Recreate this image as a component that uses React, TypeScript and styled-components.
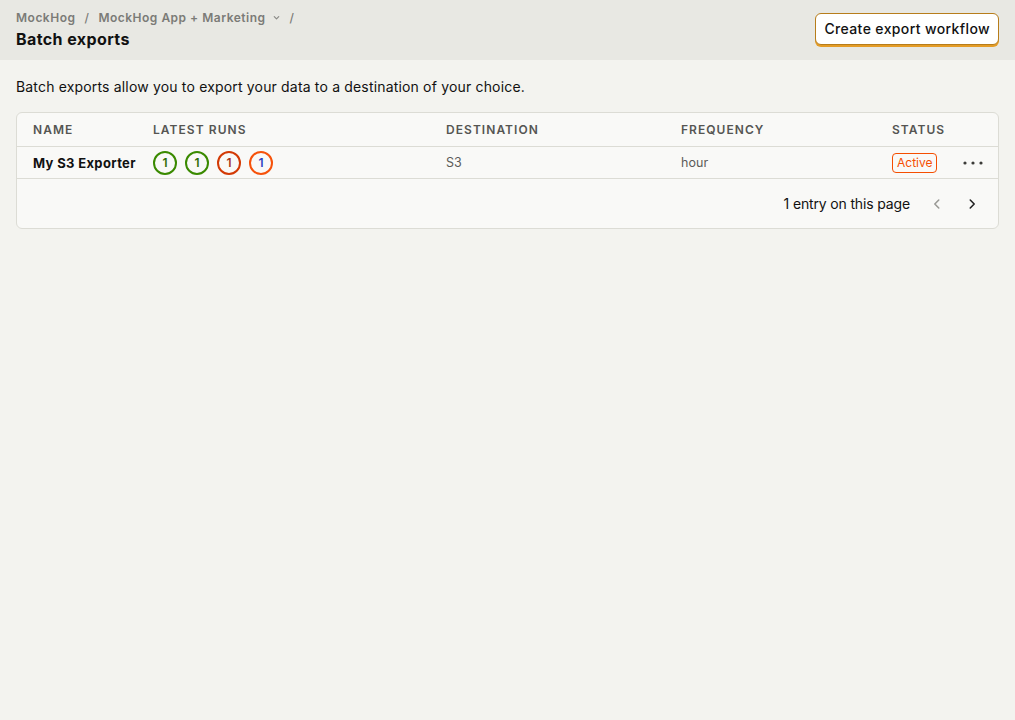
import React from "react";
import styled, { createGlobalStyle } from "styled-components";

const Global = createGlobalStyle`
  html, body { margin: 0; padding: 0; background: #f3f3ef; }
  body { font-family: Inter, "Noto Sans", sans-serif; color: #111; -webkit-font-smoothing: antialiased; }
  * { box-sizing: border-box; }
`;

const Page = styled.div`
  min-height: 720px;
  background: #f3f3ef;
`;

const TopBar = styled.header`
  height: 60px;
  background: #e8e8e3;
  display: flex;
  align-items: center;
  justify-content: space-between;
  padding: 0 16px;
`;

const TitleBlock = styled.div`
  display: flex;
  flex-direction: column;
  gap: 1px;
`;

const Crumbs = styled.nav`
  display: flex;
  align-items: center;
  gap: 8px;
  font-size: 12px;
  font-weight: 600;
  letter-spacing: 0.5px;
  color: #7b7b77;
  line-height: 16px;
`;

const Crumb = styled.span`
  display: inline-flex;
  align-items: center;
  gap: 6px;
`;

const Sep = styled.span`
  font-weight: 500;
  color: #7b7b77;
  padding: 0 1px;
`;

const Title = styled.h1`
  margin: 0;
  font-size: 16px;
  font-weight: 700;
  letter-spacing: 0.4px;
  line-height: 24px;
  color: #111;
`;

const PrimaryButton = styled.button`
  font-family: inherit;
  font-size: 14px;
  font-weight: 500;
  letter-spacing: 0.38px;
  color: #111;
  background: #fff;
  border: 1px solid #b77d1b;
  border-radius: 6px;
  height: 32px;
  padding: 0 8px 2px;
  box-shadow: 0 2px 0 0 #e49c26;
  margin-top: -2px;
  cursor: pointer;
`;

const Content = styled.main`
  padding: 16px 16px;
`;

const Description = styled.p`
  margin: 0 0 14px;
  font-size: 14px;
  letter-spacing: 0.17px;
  line-height: 22px;
  color: #111;
`;

const Table = styled.div`
  background: #f9f9f7;
  border: 1px solid #dcdcd5;
  border-radius: 6px;
  overflow: hidden;
`;

const Row = styled.div<{ $head?: boolean }>`
  display: grid;
  grid-template-columns: 120px 293px 235px 211px 77px 1fr;
  align-items: center;
  height: ${(p) => (p.$head ? "34px" : "32px")};
  border-bottom: 1px solid #dcdcd5;
`;

const HeadCell = styled.div`
  padding: 0 16px;
  font-size: 12px;
  font-weight: 600;
  letter-spacing: 1.05px;
  text-transform: uppercase;
  color: #555552;
  white-space: nowrap;
`;

const Cell = styled.div<{ $strong?: boolean; $center?: boolean }>`
  padding: 0 16px;
  font-size: ${(p) => (p.$strong ? "13px" : "12.5px")};
  letter-spacing: ${(p) => (p.$strong ? "0.35px" : "0.1px")};
  white-space: nowrap;
  font-weight: ${(p) => (p.$strong ? 700 : 400)};
  color: ${(p) => (p.$strong ? "#111" : "#5c5c59")};
  display: flex;
  align-items: center;
  justify-content: ${(p) => (p.$center ? "center" : "flex-start")};
`;

const Runs = styled.div`
  display: flex;
  gap: 8px;
`;

const RunBadge = styled.span<{ $ring: string; $text: string }>`
  width: 24px;
  height: 24px;
  border-radius: 50%;
  border: 2px solid ${(p) => p.$ring};
  color: ${(p) => p.$text};
  font-size: 12px;
  font-weight: 600;
  letter-spacing: 0;
  display: inline-flex;
  align-items: center;
  justify-content: center;
`;

const Tag = styled.span`
  border: 1px solid #f54e00;
  color: #f54e00;
  border-radius: 4px;
  font-size: 12px;
  font-weight: 400;
  letter-spacing: 0;
  line-height: 18px;
  padding: 0 4px;
`;

const MenuButton = styled.button`
  border: none;
  background: transparent;
  padding: 4px;
  display: inline-flex;
  align-items: center;
  color: #3b3b38;
  cursor: pointer;
  margin-left: -10px;
`;

const Footer = styled.div`
  height: 49px;
  display: flex;
  align-items: center;
  justify-content: flex-end;
  padding: 0 12px 0 16px;
  gap: 6px;
`;

const FooterText = styled.span`
  font-size: 14px;
  letter-spacing: -0.15px;
  color: #111;
  margin-right: 6px;
`;

const PageButton = styled.button<{ $disabled?: boolean }>`
  width: 29px;
  height: 28px;
  border: none;
  background: transparent;
  display: inline-flex;
  align-items: center;
  justify-content: center;
  color: ${(p) => (p.$disabled ? "#9a9a96" : "#222")};
  padding: 0;
`;

const ChevronDown = () => (
  <svg width="9" height="9" viewBox="0 0 10 10" fill="none" stroke="#8a8a86" strokeWidth="1.3" strokeLinecap="round" strokeLinejoin="round">
    <path d="M2.5 4 L5 6.5 L7.5 4" />
  </svg>
);

const Chevron = ({ dir }: { dir: "left" | "right" }) => (
  <svg width="14" height="14" viewBox="0 0 16 16" fill="none" stroke="currentColor" strokeWidth="1.8" strokeLinecap="round" strokeLinejoin="round">
    {dir === "left" ? <path d="M10 3.5 L5.5 8 L10 12.5" /> : <path d="M6 3.5 L10.5 8 L6 12.5" />}
  </svg>
);

const Dots = () => (
  <svg width="20" height="4" viewBox="0 0 20 4" fill="currentColor">
    <circle cx="2" cy="2" r="1.6" />
    <circle cx="10" cy="2" r="1.6" />
    <circle cx="18" cy="2" r="1.6" />
  </svg>
);

const runs = [
  { ring: "#3a8a00", text: "#2f6e05" },
  { ring: "#3a8a00", text: "#2f6e05" },
  { ring: "#d33a05", text: "#a8341a" },
  { ring: "#f6520a", text: "#2b3fc2" },
];

export default function App() {
  return (
    <Page>
      <Global />
      <TopBar>
        <TitleBlock>
          <Crumbs>
            <Crumb>MockHog</Crumb>
            <Sep>/</Sep>
            <Crumb>
              MockHog App + Marketing <ChevronDown />
            </Crumb>
            <Sep>/</Sep>
          </Crumbs>
          <Title>Batch exports</Title>
        </TitleBlock>
        <PrimaryButton>Create export workflow</PrimaryButton>
      </TopBar>
      <Content>
        <Description>Batch exports allow you to export your data to a destination of your choice.</Description>
        <Table>
          <Row $head>
            <HeadCell>Name</HeadCell>
            <HeadCell>Latest runs</HeadCell>
            <HeadCell>Destination</HeadCell>
            <HeadCell>Frequency</HeadCell>
            <HeadCell>Status</HeadCell>
            <HeadCell />
          </Row>
          <Row>
            <Cell $strong>My S3 Exporter</Cell>
            <Cell>
              <Runs>
                {runs.map((r, i) => (
                  <RunBadge key={i} $ring={r.ring} $text={r.text}>
                    1
                  </RunBadge>
                ))}
              </Runs>
            </Cell>
            <Cell>S3</Cell>
            <Cell>hour</Cell>
            <Cell>
              <Tag>Active</Tag>
            </Cell>
            <Cell $center>
              <MenuButton aria-label="More">
                <Dots />
              </MenuButton>
            </Cell>
          </Row>
          <Footer>
            <FooterText>1 entry on this page</FooterText>
            <PageButton $disabled aria-label="Previous">
              <Chevron dir="left" />
            </PageButton>
            <PageButton aria-label="Next">
              <Chevron dir="right" />
            </PageButton>
          </Footer>
        </Table>
      </Content>
    </Page>
  );
}
